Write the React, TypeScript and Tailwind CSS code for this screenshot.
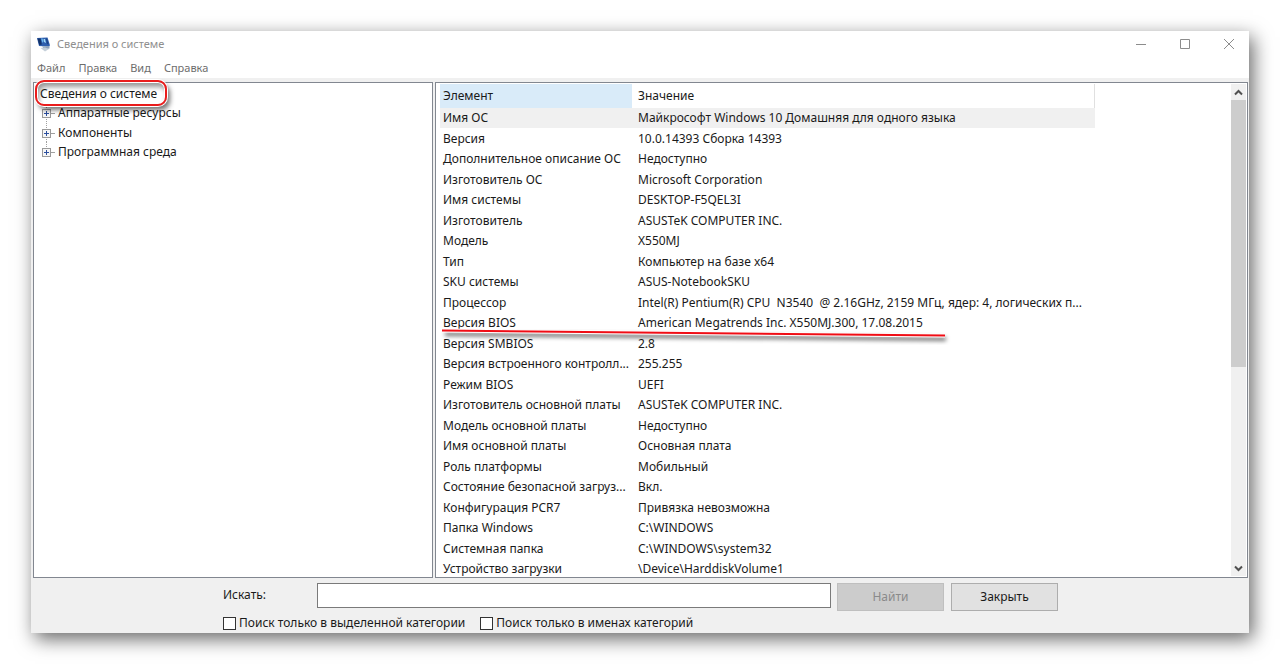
import { useState } from 'react';

interface InfoRow {
  name: string;
  value: string;
}

const MENU = ['Файл', 'Правка', 'Вид', 'Справка'];

const CATEGORIES = ['Аппаратные ресурсы', 'Компоненты', 'Программная среда'];

const ROWS: InfoRow[] = [
  { name: 'Имя ОС', value: 'Майкрософт Windows 10 Домашняя для одного языка' },
  { name: 'Версия', value: '10.0.14393 Сборка 14393' },
  { name: 'Дополнительное описание ОС', value: 'Недоступно' },
  { name: 'Изготовитель ОС', value: 'Microsoft Corporation' },
  { name: 'Имя системы', value: 'DESKTOP-F5QEL3I' },
  { name: 'Изготовитель', value: 'ASUSTeK COMPUTER INC.' },
  { name: 'Модель', value: 'X550MJ' },
  { name: 'Тип', value: 'Компьютер на базе x64' },
  { name: 'SKU системы', value: 'ASUS-NotebookSKU' },
  { name: 'Процессор', value: 'Intel(R) Pentium(R) CPU  N3540  @ 2.16GHz, 2159 МГц, ядер: 4, логических п...' },
  { name: 'Версия BIOS', value: 'American Megatrends Inc. X550MJ.300, 17.08.2015' },
  { name: 'Версия SMBIOS', value: '2.8' },
  { name: 'Версия встроенного контролл...', value: '255.255' },
  { name: 'Режим BIOS', value: 'UEFI' },
  { name: 'Изготовитель основной платы', value: 'ASUSTeK COMPUTER INC.' },
  { name: 'Модель основной платы', value: 'Недоступно' },
  { name: 'Имя основной платы', value: 'Основная плата' },
  { name: 'Роль платформы', value: 'Мобильный' },
  { name: 'Состояние безопасной загруз...', value: 'Вкл.' },
  { name: 'Конфигурация PCR7', value: 'Привязка невозможна' },
  { name: 'Папка Windows', value: 'C:\\WINDOWS' },
  { name: 'Системная папка', value: 'C:\\WINDOWS\\system32' },
  { name: 'Устройство загрузки', value: '\\Device\\HarddiskVolume1' }
];

const AppIcon = () => (
  <svg width="14" height="15" viewBox="0 0 14 15" aria-hidden="true">
    <path d="M0 1 L10.5 0.5 L13 8.5 L11.5 9.5 L2 9 Z" fill="#2f5fae" />
    <path d="M0.5 1.5 L3.5 1.4 L4.8 7.5 L2.3 8 Z" fill="#14336b" />
    <path d="M4 1.5 L5.5 1.5 L6.5 4 L5.5 6 Z" fill="#6db7ee" />
    <path d="M6.5 2 L8 2 L9 6 L7 5 Z" fill="#a5dcf8" />
    <path d="M9 1.5 L10 1.5 L11.7 7.5 L10 7 Z" fill="#1c4284" />
    <path d="M5 9.5 L12.5 9 L12.5 11.5 L7.5 12.5 Z" fill="#8fa3ba" />
    <path d="M3.5 11 L8 10.5 L12 12 L8 14.5 Z" fill="#c6d0da" />
  </svg>
);

const TitleBar = () => (
  <header className="flex h-[26px] items-center pl-1.5">
    <AppIcon />
    <h1 className="ml-1.5 text-[11px] text-[#8f8f8f]">Сведения о системе</h1>
    <div className="ml-auto flex h-full items-center gap-[22px] pr-[9px] text-[#8c8c8c]">
      <button type="button" aria-label="Свернуть" className="flex size-[22px] items-center justify-center">
        <svg width="12" height="12" viewBox="0 0 12 12" stroke="currentColor">
          <path d="M1 6.5h10" />
        </svg>
      </button>
      <button type="button" aria-label="Развернуть" className="flex size-[22px] items-center justify-center">
        <svg width="12" height="12" viewBox="0 0 12 12" stroke="currentColor" fill="none">
          <path d="M1.5 1.5h9v9h-9z" />
        </svg>
      </button>
      <button type="button" aria-label="Закрыть окно" className="flex size-[22px] items-center justify-center">
        <svg width="12" height="12" viewBox="0 0 12 12" stroke="currentColor">
          <path d="M1 1l10 10M11 1L1 11" />
        </svg>
      </button>
    </div>
  </header>
);

const CategoryTree = () => (
  <nav className="w-[400px] shrink-0 border border-[#828790] bg-white pt-px pl-1.5">
    <div className="relative flex h-[19px] w-fit items-center">
      <button type="button">Сведения о системе</button>
      {/* red marker around the root node */}
      <span className="pointer-events-none absolute -top-1 -right-2.5 -bottom-[3px] -left-[5px] rounded-[9px] border-2 border-[#e91c1c] shadow-[0_0_0_1px_#fff,3px_4px_5px_rgba(0,0,0,0.55),inset_0_0_0_1px_#fff,inset_2px_5px_5px_rgba(0,0,0,0.4)]" />
    </div>
    <ul className="ml-px">
      {CATEGORIES.map((category, index) => (
        <li key={category} className="flex items-center odd:h-5 even:h-[19px]">
          <svg width="15" height="20" viewBox="0 0 15 20" className="shrink-0" aria-hidden="true">
            <path
              d={index === CATEGORIES.length - 1 ? 'M5.5 0v6' : 'M5.5 0v20'}
              stroke="#a0a0a0"
              strokeDasharray="1 1"
            />
            <path d="M10 10.5h4" stroke="#a0a0a0" />
            <rect x="1.5" y="6.5" width="8" height="8" fill="#f6f6f6" stroke="#9a9a9a" />
            <path d="M3 10.5h5M5.5 8v5" stroke="#2c4f9e" />
          </svg>
          <button type="button" className="ml-0.5">{category}</button>
        </li>
      ))}
    </ul>
  </nav>
);

const Scrollbar = () => (
  <div className="flex w-[15px] shrink-0 flex-col bg-[#f0f0f0]">
    <button type="button" aria-label="Вверх" className="flex h-4 items-center justify-center">
      <svg width="9" height="7" viewBox="0 0 9 7" fill="none" stroke="#505050" strokeWidth="2">
        <path d="M1 5.5l3.5-3.5L8 5.5" />
      </svg>
    </button>
    <div className="min-h-0 flex-1">
      <div className="h-[58%] bg-[#cdcdcd]" />
    </div>
    <button type="button" aria-label="Вниз" className="flex h-4 items-center justify-center">
      <svg width="9" height="7" viewBox="0 0 9 7" fill="none" stroke="#505050" strokeWidth="2">
        <path d="M1 1.5L4.5 5 8 1.5" />
      </svg>
    </button>
  </div>
);

const Underline = () => (
  <svg
    width="512"
    height="18"
    viewBox="0 0 512 18"
    className="pointer-events-none absolute top-[14px] left-0"
    aria-hidden="true"
  >
    <defs>
      <filter id="soft" x="-5%" y="-100%" width="110%" height="400%">
        <feGaussianBlur stdDeviation="2" />
      </filter>
    </defs>
    <path d="M5 7L506 12" stroke="#000" strokeOpacity="0.55" strokeWidth="4" filter="url(#soft)" />
    <path d="M2 3.5L505 8.5" stroke="#fff" strokeWidth="4" />
    <path d="M2 3.5L505 8.5" stroke="#f00d15" strokeWidth="2" />
  </svg>
);

const DetailsPanel = () => (
  <section className="flex min-w-0 flex-1 border border-[#828790] bg-white py-px pr-px">
    <div className="min-w-0 flex-1 overflow-hidden">
      <table className="ml-1 w-[655px] table-fixed border-separate border-spacing-0 text-left">
        <thead>
          <tr className="h-6">
            <th className="w-[192px] bg-[#d9ebf9] p-0 pl-[3px] font-normal">Элемент</th>
            <th className="border-r border-[#e0e0e0] p-0 pl-1.5 font-normal">Значение</th>
          </tr>
        </thead>
        <tbody>
          {ROWS.map((row, index) => (
            <tr key={row.name} className={index === 0 ? 'h-5 bg-[#f0f0f0]' : 'odd:h-5 even:h-[21px]'}>
              <td className="relative p-0 pl-[3px] whitespace-pre">
                {row.name}
                {row.name === 'Версия BIOS' && <Underline />}
              </td>
              <td className="p-0 pl-1.5 whitespace-pre">{row.value}</td>
            </tr>
          ))}
        </tbody>
      </table>
    </div>
    <Scrollbar />
  </section>
);

const CheckBox = ({ id, label }: { id: string; label: string }) => (
  <div className="flex items-center gap-[3px]">
    <input id={id} type="checkbox" className="size-[13px] appearance-none border border-[#333333] bg-white checked:bg-[#333333]" />
    <label htmlFor={id}>{label}</label>
  </div>
);

const SearchBar = () => {
  const [query, setQuery] = useState('');

  return (
    <form className="flex h-[55px] shrink-0 flex-col gap-1 pt-[5px] pr-[191px] pl-48" onSubmit={(e) => e.preventDefault()}>
      <div className="flex h-7 items-center">
        <label htmlFor="query" className="mb-1 w-[94px] shrink-0">Искать:</label>
        <input
          id="query"
          type="text"
          value={query}
          onChange={(e) => setQuery(e.target.value)}
          className="mb-1 h-[25px] min-w-0 flex-1 border border-[#7a7a7a] bg-white px-1 outline-none"
        />
        <button
          type="submit"
          disabled={!query}
          className="ml-1.5 h-7 w-[107px] border border-[#bfbfbf] bg-[#cccccc] text-[#8a8a8a]"
        >
          Найти
        </button>
        <button type="button" className="ml-[7px] h-7 w-[107px] border border-[#adadad] bg-[#e1e1e1]">
          Закрыть
        </button>
      </div>
      <div className="flex items-center gap-[15px]">
        <CheckBox id="selected-only" label="Поиск только в выделенной категории" />
        <CheckBox id="names-only" label="Поиск только в именах категорий" />
      </div>
    </form>
  );
};

const App = () => (
  <div className="h-screen bg-white p-[31px] font-['Noto_Sans',sans-serif] text-[12px] leading-4 text-[#1a1a1a]">
    <main className="flex h-full flex-col bg-[#f0f0f0] shadow-[4px_6px_18px_rgba(0,0,0,0.6)]">
      <div className="shrink-0 bg-white">
        <TitleBar />
        <div className="flex h-[21px] items-center gap-[13px] pt-px pl-1.5 text-[11px] text-[#6d6d6d]">
          {MENU.map((item) => (
            <button key={item} type="button">{item}</button>
          ))}
        </div>
      </div>
      <div className="flex min-h-0 flex-1 gap-0.5 pt-1 pr-px pl-0.5">
        <CategoryTree />
        <DetailsPanel />
      </div>
      <SearchBar />
    </main>
  </div>
);

export default App;
